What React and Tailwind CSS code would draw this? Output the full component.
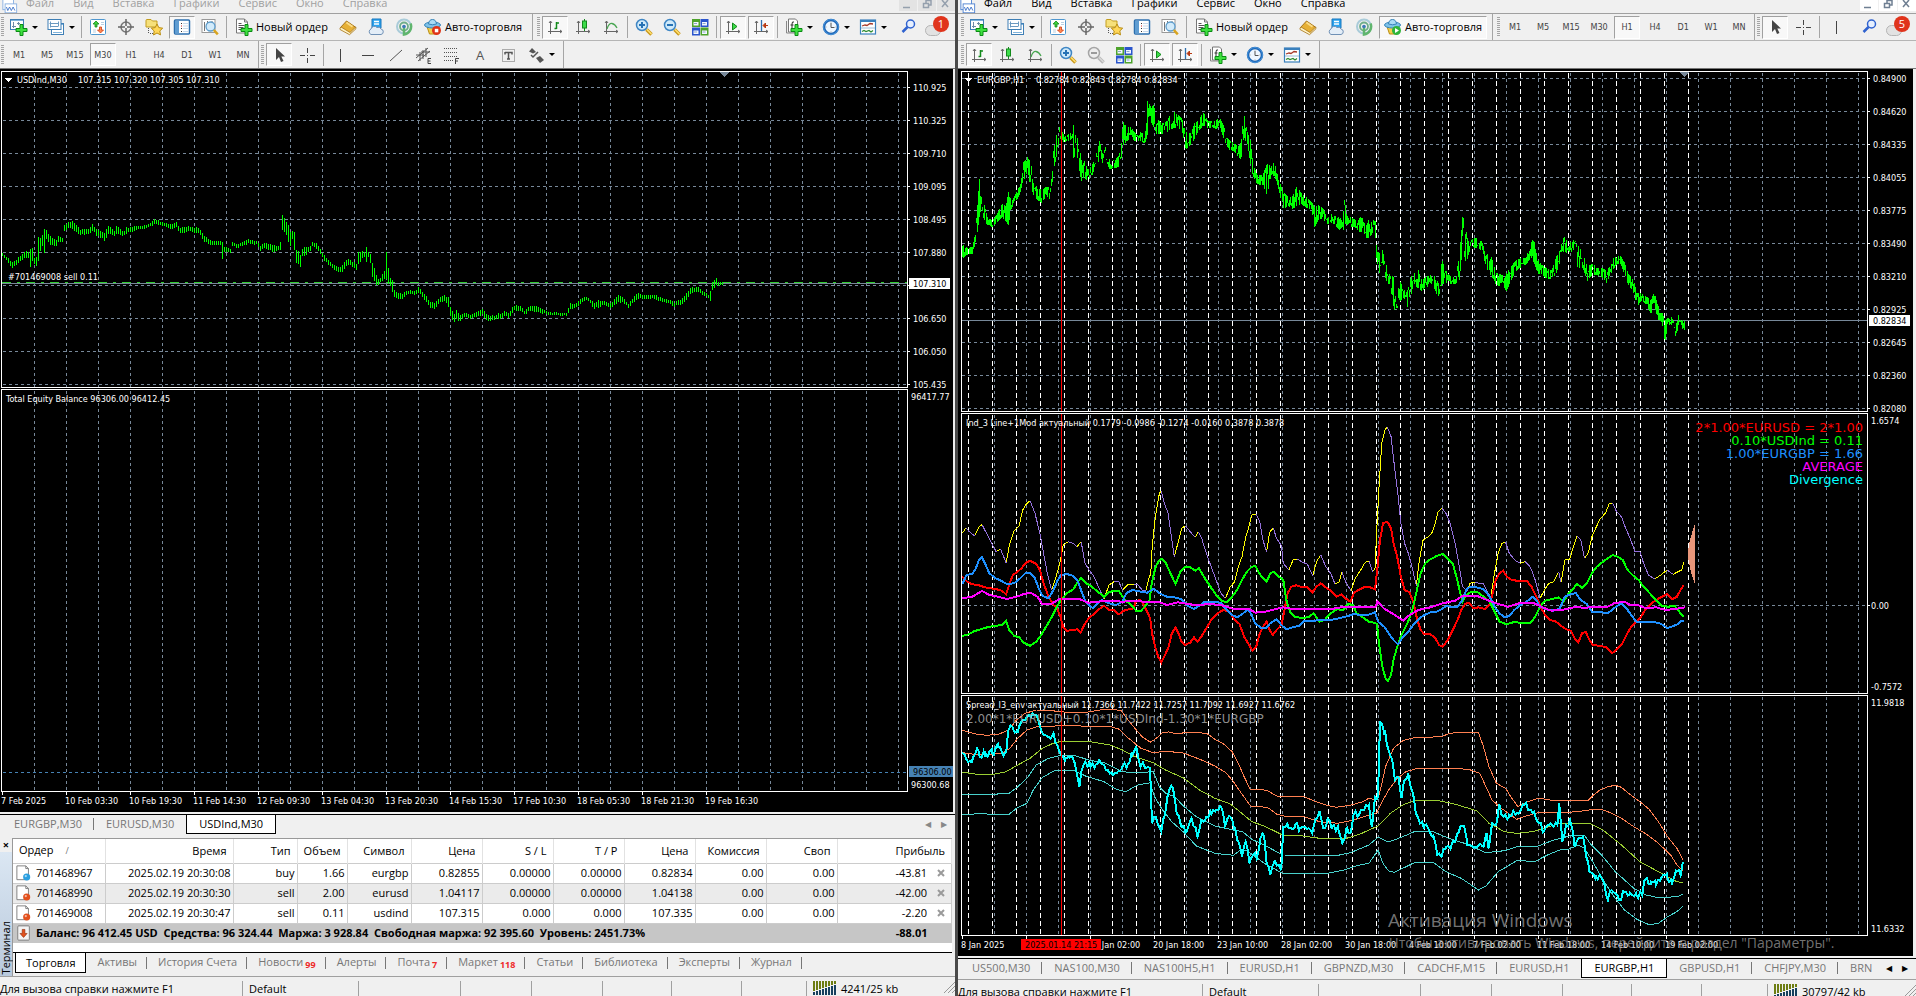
import React from "react";
import clsx from "clsx";

/* ---------- chart data ---------- */

// USDInd M30: [x, high, low]
const USDIND = [
    [2, 253, 255], [12, 262, 267], [20, 255, 260], [26, 251, 257], [28, 252, 257], [30, 241, 273], [32, 248, 262], [34, 258, 264],
    [36, 255, 265], [38, 237, 264], [40, 237, 250], [42, 235, 245], [44, 226, 252], [46, 230, 238], [48, 234, 243], [56, 240, 245],
    [58, 236, 241], [62, 238, 241], [64, 225, 230], [68, 222, 227], [72, 221, 228], [80, 229, 234], [88, 229, 234], [92, 224, 230],
    [97, 229, 236], [104, 233, 240], [108, 225, 233], [114, 231, 236], [116, 226, 233], [124, 231, 235], [126, 227, 233], [137, 226, 229],
    [147, 225, 227], [155, 218, 223], [162, 222, 225], [170, 224, 228], [176, 222, 227], [180, 227, 233], [188, 226, 230], [199, 228, 233],
    [203, 234, 240], [210, 240, 244], [220, 241, 244], [222, 242, 258], [224, 247, 251], [230, 248, 252], [232, 242, 245], [237, 244, 247],
    [248, 239, 243], [257, 241, 244], [260, 246, 250], [264, 242, 247], [272, 245, 251], [279, 246, 250], [280, 242, 249], [282, 215, 229],
    [284, 218, 231], [288, 225, 241], [290, 231, 245], [292, 229, 240], [294, 231, 249], [296, 246, 262], [300, 255, 266], [302, 247, 257],
    [310, 246, 250], [312, 242, 246], [317, 243, 248], [322, 252, 257], [328, 260, 265], [337, 267, 271], [342, 265, 271], [347, 258, 263],
    [356, 263, 269], [358, 252, 263], [364, 251, 256], [366, 247, 262], [368, 251, 257], [370, 252, 262], [372, 260, 276], [377, 279, 286],
    [383, 273, 280], [385, 269, 276], [386, 252, 278], [388, 267, 283], [390, 278, 285], [392, 280, 292], [394, 290, 297], [401, 294, 299],
    [408, 290, 293], [415, 291, 294], [418, 287, 292], [425, 295, 300], [430, 301, 307], [434, 302, 309], [440, 297, 302], [444, 294, 300],
    [448, 297, 306], [450, 306, 315], [454, 313, 323], [456, 310, 319], [460, 315, 320], [465, 312, 316], [470, 315, 318], [479, 310, 315],
    [482, 309, 314], [484, 310, 317], [487, 315, 320], [493, 315, 320], [497, 313, 317], [501, 314, 319], [503, 311, 315], [508, 312, 317],
    [514, 305, 310], [520, 306, 310], [524, 310, 314], [530, 306, 310], [537, 306, 311], [542, 309, 313], [550, 312, 314], [567, 313, 315],
    [569, 303, 309], [575, 304, 307], [580, 299, 303], [586, 296, 299], [590, 299, 303], [593, 302, 308], [598, 300, 307], [603, 301, 304],
    [610, 303, 307], [618, 295, 301], [622, 297, 302], [628, 303, 307], [630, 300, 305], [633, 296, 302], [637, 293, 298], [643, 295, 298],
    [653, 294, 298], [663, 298, 301], [670, 300, 303], [674, 302, 306], [682, 298, 303], [687, 292, 298], [690, 288, 293], [697, 286, 291],
    [703, 291, 294], [708, 294, 297], [710, 289, 300], [712, 282, 290], [716, 278, 285], [718, 281, 285], [722, 282, 284],
];

// EURGBP H1: [column, high, low]
const EURGBP = [
    [20, 552, 592], [28, 565, 580], [36, 560, 578], [40, 520, 560], [44, 430, 510], [47, 355, 470], [50, 400, 440], [54, 425, 475],
    [60, 470, 492], [68, 482, 498], [76, 460, 482], [84, 430, 470], [90, 440, 480], [94, 395, 495], [99, 425, 445], [106, 400, 420],
    [112, 380, 405], [117, 310, 370], [122, 300, 345], [125, 290, 350], [130, 300, 370], [135, 365, 405], [142, 385, 420], [148, 390, 425],
    [156, 380, 405], [163, 385, 420], [167, 270, 330], [172, 225, 290], [176, 200, 245], [180, 210, 240], [186, 230, 245], [192, 215, 240],
    [198, 222, 240], [200, 160, 300], [202, 225, 300], [206, 225, 290], [212, 290, 360], [217, 300, 350], [223, 330, 360], [230, 315, 345],
    [236, 290, 320], [241, 240, 300], [246, 255, 305], [251, 255, 310], [256, 300, 330], [264, 290, 320], [272, 292, 320], [277, 265, 300],
    [280, 185, 255], [286, 200, 240], [293, 200, 235], [300, 220, 240], [308, 215, 240], [316, 225, 248], [320, 118, 220], [325, 140, 180],
    [330, 135, 200], [335, 175, 220], [343, 190, 218], [350, 185, 215], [358, 160, 205], [363, 155, 200], [370, 165, 200], [376, 175, 210],
    [382, 215, 265], [390, 220, 250], [396, 190, 235], [403, 180, 210], [410, 155, 195], [418, 182, 200], [428, 182, 202], [438, 175, 205],
    [445, 200, 240], [452, 240, 265], [460, 250, 270], [468, 260, 290], [472, 245, 295], [476, 155, 230], [482, 215, 250], [487, 240, 310],
    [491, 305, 345], [498, 345, 370], [507, 345, 372], [514, 310, 405], [520, 320, 350], [526, 305, 345], [532, 350, 380], [540, 395, 445],
    [548, 410, 435], [555, 410, 445], [562, 380, 435], [570, 400, 430], [578, 410, 440], [586, 425, 445], [591, 440, 500], [598, 435, 475],
    [605, 445, 475], [612, 475, 492], [620, 460, 485], [628, 470, 500], [637, 475, 515], [640, 412, 490], [643, 465, 490], [655, 475, 500],
    [662, 480, 510], [668, 465, 515], [674, 500, 532], [680, 475, 530], [686, 480, 515], [691, 485, 535], [692, 575, 655], [698, 580, 630],
    [702, 568, 600], [706, 600, 650], [711, 640, 685], [716, 650, 700], [720, 645, 745], [724, 710, 758], [730, 665, 720], [736, 685, 710],
    [742, 690, 740], [748, 650, 700], [753, 640, 670], [758, 620, 680], [765, 660, 690], [772, 650, 685], [780, 645, 665], [787, 650, 690],
    [792, 670, 712], [798, 600, 670], [804, 630, 665], [812, 650, 670], [820, 650, 670], [826, 590, 660], [832, 453, 600], [838, 520, 600],
    [844, 540, 565], [850, 535, 560], [858, 530, 560], [864, 550, 580], [870, 585, 620], [876, 575, 640], [882, 615, 655], [888, 640, 685],
    [895, 645, 665], [902, 640, 692], [910, 620, 660], [918, 600, 630], [926, 595, 620], [934, 595, 612], [940, 560, 600], [944, 540, 590],
    [948, 545, 610], [954, 600, 640], [960, 615, 640], [968, 625, 655], [976, 630, 655], [983, 590, 640], [990, 560, 600], [996, 530, 570],
    [1004, 548, 580], [1010, 545, 570], [1014, 528, 560], [1018, 555, 620], [1026, 575, 620], [1034, 620, 660], [1042, 610, 640], [1050, 625, 642],
    [1058, 625, 650], [1064, 630, 668], [1070, 620, 650], [1076, 595, 625], [1082, 590, 610], [1088, 588, 610], [1094, 605, 640], [1100, 640, 670],
    [1108, 655, 690], [1115, 700, 735], [1122, 700, 720], [1130, 710, 730], [1137, 720, 760], [1143, 695, 735], [1148, 735, 775], [1154, 750, 780],
    [1160, 780, 845], [1164, 775, 805], [1170, 770, 790], [1177, 790, 825], [1182, 765, 800], [1186, 765, 790], [1190, 790, 812], [1193, 775, 800],
];

const DIVERGENCE = [
    [20, 400], [26, 383], [32, 397], [40, 407], [47, 380], [52, 374], [58, 395], [66, 425], [75, 455], [82, 447], [91, 488], [97, 430],
    [104, 392], [112, 378], [118, 330], [124, 312], [130, 302], [138, 340], [146, 400], [152, 460], [158, 520], [165, 570], [172, 530],
    [178, 492], [184, 435], [192, 425], [200, 430], [206, 440], [213, 425], [219, 490], [226, 510], [234, 530], [242, 565], [250, 598],
    [258, 555], [266, 545], [274, 545], [280, 570], [288, 555], [298, 553], [305, 555], [312, 570], [318, 572], [322, 540], [326, 520],
    [328, 450], [332, 370], [336, 320], [340, 280], [343, 274], [348, 310], [354, 340], [358, 390], [364, 470], [370, 430], [376, 385],
    [382, 377], [390, 395], [398, 412], [403, 395], [409, 417], [416, 460], [424, 500], [432, 540], [440, 580], [447, 595], [455, 560],
    [462, 545], [468, 500], [474, 470], [480, 412], [486, 375], [490, 345], [497, 343], [503, 365], [508, 420], [514, 455], [519, 395],
    [525, 385], [530, 415], [538, 437], [541, 490], [550, 510], [557, 480], [564, 477], [572, 487], [580, 492], [589, 527], [595, 485],
    [602, 465], [610, 500], [618, 520], [625, 552], [632, 545], [636, 515], [642, 545], [651, 572], [658, 535], [666, 512], [674, 487],
    [680, 483], [686, 515], [690, 505], [693, 380], [697, 240], [701, 130], [706, 90], [710, 81], [716, 110], [721, 190], [727, 280],
    [732, 370], [738, 430], [744, 460], [750, 500], [757, 557], [762, 480], [768, 420], [775, 412], [782, 400], [788, 370], [792, 335],
    [799, 325], [806, 343], [812, 370], [820, 430], [826, 490], [832, 560], [840, 572], [844, 550], [852, 547], [860, 550], [866, 552],
    [872, 575], [878, 592], [884, 520], [890, 460], [896, 430], [902, 427], [908, 460], [918, 482], [926, 490], [934, 485], [942, 500],
    [950, 540], [958, 595], [965, 570], [972, 550], [980, 545], [988, 515], [992, 547], [998, 480], [1006, 478], [1012, 440], [1018, 408],
    [1024, 420], [1030, 475], [1036, 460], [1042, 410], [1048, 385], [1056, 355], [1064, 340], [1070, 312], [1076, 310], [1082, 335],
    [1090, 350], [1096, 380], [1104, 415], [1112, 455], [1120, 455], [1126, 490], [1134, 525], [1144, 537], [1154, 525], [1164, 510],
    [1174, 523], [1182, 515], [1188, 510], [1191, 485],
];

const IND_EURUSD = [
    [20, 530], [28, 545], [36, 553], [46, 555], [56, 562], [66, 565], [76, 568], [84, 572], [91, 583], [96, 555], [102, 525], [108, 518],
    [116, 505], [122, 490], [130, 482], [140, 492], [146, 510], [152, 550], [160, 590], [168, 615], [174, 625], [180, 655], [184, 683],
    [190, 692], [200, 690], [206, 688], [212, 698], [218, 675], [226, 652], [234, 643], [242, 628], [250, 617], [258, 630], [266, 630],
    [274, 643], [282, 632], [290, 628], [298, 625], [302, 603], [308, 600], [314, 612], [320, 635], [325, 655], [328, 700], [333, 740],
    [338, 770], [343, 788], [349, 765], [355, 740], [360, 700], [366, 683], [371, 700], [376, 725], [381, 735], [390, 728], [396, 712],
    [402, 725], [408, 710], [416, 685], [424, 660], [434, 640], [444, 630], [454, 635], [462, 660], [470, 672], [478, 712], [484, 730],
    [491, 752], [497, 740], [502, 705], [508, 680], [514, 665], [519, 690], [524, 705], [530, 690], [538, 675], [542, 640], [548, 580],
    [554, 560], [562, 556], [572, 562], [580, 562], [588, 578], [594, 562], [602, 550], [610, 562], [618, 572], [628, 590], [636, 583],
    [642, 595], [650, 605], [656, 578], [666, 567], [674, 560], [682, 562], [690, 568], [694, 500], [698, 420], [703, 370], [710, 365],
    [716, 385], [720, 430], [726, 470], [732, 530], [738, 570], [746, 577], [752, 605], [758, 655], [764, 690], [770, 702], [780, 703],
    [788, 715], [794, 735], [800, 740], [808, 720], [816, 690], [824, 660], [830, 630], [836, 612], [842, 608], [850, 625], [858, 622],
    [868, 627], [876, 612], [881, 580], [886, 540], [892, 520], [898, 512], [904, 530], [912, 540], [924, 543], [936, 542], [944, 560],
    [952, 590], [960, 625], [966, 645], [974, 660], [984, 665], [994, 680], [1000, 688], [1008, 692], [1014, 715], [1020, 727], [1026, 700],
    [1032, 695], [1038, 720], [1044, 735], [1056, 738], [1066, 742], [1075, 760], [1082, 748], [1090, 735], [1098, 705], [1106, 680],
    [1114, 665], [1122, 650], [1130, 625], [1138, 612], [1146, 600], [1156, 590], [1164, 582], [1172, 598], [1180, 590], [1186, 570], [1191, 556],
];

const IND_USDIND = [
    [20, 708], [30, 703], [40, 693], [50, 688], [60, 682], [72, 677], [84, 676], [91, 662], [96, 690], [104, 707], [112, 712], [120, 728],
    [130, 737], [140, 725], [148, 705], [156, 680], [164, 655], [172, 625], [180, 600], [190, 580], [200, 568], [208, 545], [213, 533],
    [220, 548], [230, 560], [240, 575], [250, 590], [258, 577], [266, 572], [274, 573], [284, 600], [294, 615], [302, 632], [310, 632],
    [316, 620], [324, 600], [328, 545], [334, 500], [340, 480], [344, 476], [350, 488], [358, 520], [366, 552], [374, 515], [382, 500],
    [390, 502], [398, 512], [404, 505], [412, 530], [422, 558], [432, 585], [442, 603], [450, 607], [458, 590], [466, 570], [474, 540],
    [482, 515], [490, 500], [496, 498], [502, 520], [508, 535], [514, 545], [520, 520], [526, 515], [534, 530], [541, 540], [546, 600],
    [552, 635], [560, 650], [570, 654], [582, 652], [590, 640], [600, 665], [608, 660], [618, 640], [628, 628], [638, 630], [646, 612],
    [654, 615], [660, 640], [670, 652], [680, 665], [688, 668], [693, 672], [697, 740], [702, 800], [707, 835], [711, 842], [716, 825],
    [720, 780], [726, 740], [733, 705], [740, 680], [746, 655], [752, 620], [758, 570], [764, 520], [772, 488], [780, 478], [790, 468],
    [800, 462], [808, 475], [816, 490], [822, 530], [828, 575], [832, 605], [838, 585], [846, 575], [856, 576], [866, 590], [876, 605],
    [884, 635], [892, 665], [904, 673], [914, 667], [930, 668], [942, 670], [950, 650], [958, 620], [966, 602], [978, 597], [988, 592],
    [996, 605], [1004, 580], [1012, 565], [1018, 552], [1026, 563], [1034, 550], [1042, 520], [1050, 500], [1058, 488], [1068, 475],
    [1076, 465], [1084, 470], [1092, 480], [1100, 510], [1108, 525], [1118, 540], [1126, 560], [1136, 580], [1146, 600], [1156, 617],
    [1166, 620], [1176, 617], [1184, 635], [1191, 652],
];

const IND_EURGBP = [
    [20, 552], [27, 525], [36, 522], [42, 505], [47, 480], [52, 472], [58, 495], [64, 520], [74, 535], [84, 543], [92, 552], [104, 550],
    [114, 535], [122, 520], [130, 518], [138, 535], [144, 565], [150, 588], [160, 595], [168, 570], [175, 540], [180, 525], [190, 522],
    [200, 528], [208, 545], [214, 577], [220, 605], [232, 625], [238, 612], [246, 600], [258, 610], [270, 615], [280, 605], [286, 580],
    [296, 570], [310, 575], [320, 578], [331, 566], [340, 580], [352, 590], [364, 592], [376, 598], [386, 618], [396, 627], [404, 618],
    [412, 607], [430, 606], [440, 608], [448, 628], [458, 645], [466, 652], [476, 640], [484, 627], [490, 645], [495, 670], [505, 683],
    [512, 685], [520, 670], [530, 658], [538, 675], [546, 688], [556, 682], [566, 678], [576, 662], [590, 662], [604, 660], [618, 660],
    [632, 655], [646, 648], [656, 642], [666, 645], [678, 645], [690, 637], [695, 665], [705, 680], [712, 700], [720, 720], [727, 733],
    [734, 715], [742, 700], [752, 675], [762, 655], [770, 645], [780, 637], [790, 635], [798, 628], [806, 617], [814, 622], [824, 620],
    [832, 600], [838, 570], [844, 560], [854, 562], [866, 567], [876, 590], [884, 620], [892, 640], [900, 652], [908, 648], [916, 630],
    [926, 615], [936, 605], [946, 590], [952, 600], [958, 620], [968, 628], [980, 632], [990, 625], [998, 590], [1008, 582], [1016, 580],
    [1024, 600], [1034, 612], [1042, 635], [1054, 636], [1068, 640], [1078, 625], [1090, 610], [1098, 625], [1106, 645], [1114, 665],
    [1130, 665], [1150, 668], [1158, 675], [1164, 685], [1174, 678], [1182, 672], [1188, 662], [1191, 662],
];

const IND_AVERAGE = [
    [20, 595], [36, 590], [52, 573], [64, 585], [78, 590], [92, 597], [108, 590], [120, 582], [131, 578], [142, 590], [150, 613], [164, 612],
    [178, 597], [190, 596], [210, 597], [224, 608], [240, 605], [260, 602], [280, 605], [300, 602], [320, 606], [340, 607], [352, 615],
    [370, 607], [380, 610], [400, 616], [420, 612], [440, 615], [460, 627], [484, 626], [496, 638], [512, 635], [540, 622], [560, 628],
    [590, 626], [620, 627], [640, 620], [670, 622], [691, 620], [694, 605], [704, 625], [716, 638], [728, 652], [736, 662], [744, 648],
    [760, 630], [780, 622], [800, 610], [820, 602], [832, 588], [856, 588], [876, 603], [890, 612], [906, 620], [924, 610], [946, 608],
    [962, 622], [976, 632], [1000, 628], [1016, 620], [1030, 624], [1046, 620], [1066, 622], [1078, 610], [1095, 605], [1104, 615],
    [1116, 615], [1130, 625], [1146, 622], [1162, 630], [1180, 626], [1193, 622],
];

const ENV_UPPER2 = [
    [20, 120], [30, 127], [45, 133], [60, 136], [80, 132], [95, 120], [108, 90], [122, 70], [140, 60], [165, 62], [195, 68], [225, 66],
    [250, 58], [265, 58], [278, 62], [285, 80], [300, 115], [312, 140], [325, 157], [335, 145], [345, 127], [355, 126], [370, 132],
    [385, 126], [400, 126], [418, 132], [432, 150], [445, 163], [458, 185], [468, 220], [478, 262], [488, 300], [500, 298], [515, 301],
    [530, 318], [550, 320], [575, 320], [590, 332], [610, 345], [627, 352], [650, 346], [670, 335], [680, 325], [688, 328], [694, 330],
    [700, 290], [707, 230], [720, 175], [735, 152], [752, 144], [780, 142], [800, 138], [812, 130], [830, 126], [845, 129], [858, 128],
    [866, 170], [875, 230], [887, 280], [902, 295], [912, 325], [922, 350], [935, 337], [955, 325], [968, 328], [980, 332], [1035, 332],
    [1045, 315], [1055, 300], [1068, 290], [1080, 286], [1090, 292], [1105, 315], [1120, 335], [1135, 358], [1150, 395], [1165, 440],
    [1180, 475], [1190, 510],
];

const ENV_UPPER1 = [
    [20, 188], [40, 193], [60, 194], [85, 190], [97, 175], [110, 145], [125, 120], [145, 108], [170, 108], [200, 107], [240, 110],
    [262, 110], [275, 118], [290, 145], [310, 175], [328, 187], [350, 185], [375, 187], [395, 200], [415, 215], [432, 230], [448, 248],
    [460, 275], [475, 315], [488, 348], [505, 350], [518, 355], [530, 372], [542, 378], [575, 380], [600, 395], [630, 400], [655, 390],
    [675, 378], [693, 368], [700, 340], [712, 300], [725, 268], [740, 245], [755, 237], [790, 236], [825, 235], [845, 240], [860, 250],
    [870, 290], [880, 330], [895, 355], [920, 388], [935, 378], [955, 368], [985, 368], [1010, 366], [1030, 362], [1045, 358],
    [1060, 360], [1072, 368], [1090, 385], [1110, 410], [1130, 432], [1150, 460], [1170, 495], [1180, 525], [1190, 542],
];

const ENV_MIDDLE = [
    [20, 246], [40, 252], [70, 253], [90, 246], [110, 225], [130, 205], [150, 175], [165, 162], [180, 154], [230, 156], [260, 165],
    [280, 180], [300, 200], [330, 218], [350, 240], [380, 265], [405, 300], [430, 325], [455, 342], [475, 372], [490, 395], [510, 408],
    [540, 435], [570, 437], [600, 445], [640, 447], [665, 433], [680, 420], [695, 408], [715, 370], [735, 345], [755, 331], [790, 331],
    [815, 340], [855, 362], [875, 400], [900, 425], [920, 430], [945, 425], [965, 415], [985, 402], [1010, 400], [1040, 402],
    [1060, 420], [1090, 465], [1120, 515], [1150, 545], [1180, 575], [1190, 578],
];

const ENV_LOWER1 = [
    [20, 314], [60, 313], [95, 311], [110, 290], [125, 265], [140, 225], [160, 205], [180, 196], [205, 198], [225, 210], [250, 218],
    [280, 245], [300, 248], [330, 245], [340, 290], [350, 310], [365, 320], [380, 350], [400, 380], [430, 408], [460, 420], [475, 425],
    [490, 448], [510, 465], [540, 495], [630, 496], [650, 488], [680, 465], [695, 442], [712, 456], [735, 440], [755, 424], [785, 426],
    [810, 445], [835, 460], [870, 488], [900, 482], [920, 470], [955, 468], [980, 450], [1010, 436], [1030, 436], [1040, 462],
    [1060, 500], [1080, 545], [1110, 595], [1130, 615], [1150, 623], [1180, 620], [1190, 613],
];

const ENV_LOWER2 = [
    [20, 375], [45, 371], [95, 374], [108, 355], [125, 340], [135, 300], [150, 262], [170, 242], [200, 240], [220, 258], [250, 275],
    [270, 298], [285, 305], [305, 285], [325, 278], [332, 320], [345, 360], [360, 395], [380, 428], [400, 468], [430, 490], [460, 496],
    [470, 482], [480, 480], [492, 495], [510, 520], [540, 550], [610, 551], [640, 540], [660, 527], [680, 520], [695, 480], [703, 520],
    [712, 543], [722, 547], [735, 535], [755, 517], [785, 518], [805, 545], [830, 565], [858, 600], [870, 588], [890, 545], [920, 512],
    [950, 514], [970, 495], [990, 480], [1005, 477], [1020, 465], [1030, 475], [1045, 520], [1060, 570], [1080, 625], [1095, 660],
    [1115, 688], [1135, 704], [1150, 700], [1165, 680], [1180, 665], [1190, 648],
];

const SPREAD = [
    [20, 190], [26, 205], [32, 213], [38, 200], [44, 175], [48, 200], [58, 190], [68, 190], [78, 170], [84, 185], [91, 190], [95, 120],
    [102, 115], [110, 125], [116, 95], [122, 90], [128, 75], [134, 70], [140, 75], [146, 110], [152, 135], [160, 140], [168, 130],
    [174, 165], [180, 195], [188, 205], [196, 200], [204, 235], [210, 292], [214, 240], [220, 215], [228, 230], [236, 225], [242, 210],
    [250, 225], [256, 240], [264, 255], [272, 245], [280, 230], [288, 225], [296, 195], [303, 175], [310, 225], [318, 235], [325, 245],
    [328, 400], [334, 380], [343, 425], [350, 360], [356, 300], [362, 295], [368, 370], [376, 410], [384, 425], [392, 385], [402, 440],
    [408, 390], [416, 380], [424, 372], [432, 360], [440, 350], [447, 405], [455, 380], [463, 415], [468, 455], [474, 500], [480, 455],
    [486, 520], [492, 495], [498, 505], [504, 445], [510, 440], [514, 520], [520, 555], [527, 510], [538, 530], [541, 410], [550, 415],
    [560, 405], [568, 415], [576, 410], [588, 430], [593, 390], [600, 365], [606, 415], [613, 385], [620, 410], [630, 415], [637, 460],
    [644, 410], [650, 430], [655, 375], [664, 375], [672, 360], [680, 345], [685, 410], [690, 320], [694, 325], [696, 250], [698, 97],
    [706, 120], [712, 180], [718, 210], [722, 270], [728, 260], [733, 325], [738, 270], [744, 250], [750, 300], [757, 370], [763, 400],
    [770, 405], [778, 420], [785, 440], [791, 495], [798, 500], [806, 470], [814, 465], [820, 455], [828, 410], [836, 420], [840, 465],
    [850, 470], [858, 465], [866, 470], [871, 430], [875, 470], [880, 400], [888, 395], [892, 345], [898, 380], [908, 375], [920, 370],
    [932, 345], [940, 360], [948, 365], [956, 400], [964, 425], [972, 405], [980, 410], [986, 405], [989, 340], [994, 455], [1000, 405],
    [1008, 400], [1014, 470], [1022, 445], [1028, 440], [1033, 500], [1038, 545], [1048, 555], [1056, 560], [1062, 580], [1068, 630],
    [1074, 600], [1080, 610], [1086, 630], [1094, 605], [1104, 610], [1114, 615], [1124, 612], [1128, 570], [1138, 575], [1146, 585],
    [1154, 565], [1164, 560], [1172, 580], [1180, 545], [1186, 555], [1190, 515],
];

/* ---------- chart helpers ---------- */

const noise = (n) => {
    const v = Math.sin(n * 12.9898) * 43758.5453;
    return (v - Math.floor(v)) * 2 - 1;
};

const range = (from, to, step) => {
    const out = [];
    for (let v = from; v <= to; v += step) out.push(v);
    return out;
};

// stored columns -> chart units
const scaleX = (c) => 950 + c * 0.616;
const project = (points, top) => points.map(([c, ...levels]) => [scaleX(c), ...levels.map((l) => top + l / 3)]);

// one vertical high/low bar per step
const barsPath = (anchors, step, spread) => {
    let d = "";
    let i = 0;
    const last = anchors[anchors.length - 1][0];
    for (let x = Math.round(anchors[0][0]); x <= last; x += step) {
        while (i < anchors.length - 2 && anchors[i + 1][0] <= x) i++;
        const [ax, ah, al] = anchors[i];
        const [bx, bh, bl] = anchors[i + 1];
        const t = Math.min(1, Math.max(0, (x - ax) / (bx - ax)));
        const high = ah + (bh - ah) * t;
        const low = al + (bl - al) * t;
        const k = (low - high) * spread;
        d += `M${x + 0.5} ${Math.round(high + Math.max(0, noise(x) * k))}V${Math.round(low - Math.max(0, noise(x + 7) * k)) + 1}`;
    }
    return d;
};

const linePath = (points) => points.map(([x, y], i) => `${i ? "L" : "M"}${x.toFixed(1)} ${y.toFixed(1)}`).join("");

const roughPath = (points, step, amp) => {
    const out = [];
    for (let i = 0; i < points.length - 1; i++) {
        const [ax, ay] = points[i];
        const [bx, by] = points[i + 1];
        out.push([ax, ay]);
        for (let x = ax + step; x < bx; x += step) {
            out.push([x, ay + ((by - ay) * (x - ax)) / (bx - ax) + noise(x) * amp]);
        }
    }
    out.push(points[points.length - 1]);
    return linePath(out);
};

// segments going up on screen are yellow, going down are purple
const splitByDirection = (points) => {
    let up = "";
    let down = "";
    for (let i = 0; i < points.length - 1; i++) {
        const seg = linePath([points[i], points[i + 1]]);
        if (points[i + 1][1] < points[i][1]) up += seg;
        else down += seg;
    }
    return { up, down };
};

const CHART_FONT = "font-['DejaVu_Sans_Condensed','DejaVu_Sans',sans-serif]";

const Frame = ({ x, y, right, bottom }) => (
    <rect x={x + 0.5} y={y + 0.5} width={right - x} height={bottom - y} fill="none" stroke="#fff" />
);

const Grid = ({ xs, ys, left, right, top, bottom }) => (
    <path
        d={xs.map((x) => `M${x + 0.5} ${top}V${bottom}`).join("") + ys.map((y) => `M${left} ${y + 0.5}H${right}`).join("")}
        stroke="#778899"
        strokeDasharray="3 3"
        fill="none"
    />
);

const UsdIndChart = () => {
    const xs = range(34, 898, 32);
    const ys = range(87, 384, 33);
    const prices = ["110.925", "110.325", "109.710", "109.095", "108.495", "107.880", null, "106.650", "106.050", "105.435"];
    const dates = ["10 Feb 03:30", "10 Feb 19:30", "11 Feb 14:30", "12 Feb 09:30", "13 Feb 04:30", "13 Feb 20:30", "14 Feb 15:30", "17 Feb 10:30", "18 Feb 05:30", "18 Feb 21:30", "19 Feb 16:30"];

    return (
        <svg viewBox="0 69 953 743" className={clsx("block w-full h-auto bg-black", CHART_FONT)} fontSize="9" fill="#fff" role="img" aria-label="USDInd,M30">
            <g shapeRendering="crispEdges">
                <Grid xs={xs} ys={ys} left={3} right={907} top={73} bottom={387} />
                <Grid xs={xs} ys={[]} left={3} right={907} top={391} bottom={791} />
                <path d="M3 772.5H907" stroke="#4682b4" strokeDasharray="3 3" />
                <path d="M2 283.5H907" stroke="#778899" />
                <path d="M2 282.5H907" stroke="#32cd32" strokeDasharray="9 6 3 6" />
                <path d={barsPath(USDIND, 2, 0.25)} stroke="#0f0" />
                <Frame x={1} y={71} right={907} bottom={387} />
                <Frame x={1} y={389} right={907} bottom={791} />
                <path d={ys.map((y) => `M908 ${y + 0.5}h2`).join("") + "M2.5 792v3" + dates.map((_, i) => `M${66.5 + i * 64} 792v3`).join("")} stroke="#fff" />
                <path d="M719 72h10l-5 5z" fill="#778899" />
                <path d="M5 78h7l-3.5 4z" />
                <rect x="909" y="278" width="41" height="11" />
                <rect x="909" y="766" width="44" height="11" fill="#4682b4" />
            </g>
            <text x="17" y="83">USDInd,M30</text>
            <text x="78" y="83">107.315 107.320 107.305 107.310</text>
            <text x="8" y="280">#701469008 sell 0.11</text>
            <text x="6" y="402">Total Equity Balance 96306.00 96412.45</text>
            {prices.map((p, i) => p && <text key={p} x="913" y={ys[i] + 4}>{p}</text>)}
            <text x="913" y="287" fill="#000">107.310</text>
            <text x="911" y="400">96417.77</text>
            <text x="913" y="775" fill="#000">96306.00</text>
            <text x="911" y="788">96300.68</text>
            <text x="1" y="804">7 Feb 2025</text>
            {dates.map((d, i) => <text key={d} x={65 + i * 64} y="804">{d}</text>)}
        </svg>
    );
};

const EurGbpChart = () => {
    const xs = range(994, 1858, 32);
    const days = range(968, 1688, 24);
    const ys = range(78, 408, 33);
    const prices = ["0.84900", "0.84620", "0.84335", "0.84055", "0.83775", "0.83490", "0.83210", "0.82925", "0.82645", "0.82360", "0.82080"];
    const dates = ["16 Jan 02:00", "20 Jan 18:00", "23 Jan 10:00", "28 Jan 02:00", "30 Jan 18:00", "4 Feb 10:00", "7 Feb 02:00", "11 Feb 18:00", "14 Feb 10:00", "19 Feb 02:00"];
    const legend = [
        ["2*1.00*EURUSD = 2*1.00", "#f00"],
        ["0.10*USDInd = 0.11", "#0f0"],
        ["1.00*EURGBP = 1.66", "#1e90ff"],
        ["AVERAGE", "#f0f"],
        ["Divergence", "#0ff"],
    ];
    const panels = [[71, 411], [413, 693], [695, 935]];
    const divergence = splitByDirection(project(DIVERGENCE, 400));

    return (
        <svg viewBox="958 69 955 887" className={clsx("block w-full h-auto bg-black", CHART_FONT)} fontSize="9" fill="#fff" role="img" aria-label="EURGBP,H1">
            <g shapeRendering="crispEdges">
                {panels.map(([top, bottom], i) => (
                    <g key={top}>
                        <Grid xs={xs} ys={i === 0 ? ys : i === 1 ? [605] : []} left={962} right={1867} top={top + 2} bottom={bottom} />
                        <path d={days.map((x) => `M${x + 0.5} ${top + 2}V${bottom}`).join("")} stroke="#fff" strokeDasharray="5 3" />
                    </g>
                ))}
                <path d="M962 320.5H1867" stroke="#778899" />
                <path d={barsPath(project(EURGBP, 60), 1, 0.85)} stroke="#0f0" />

                <path d={divergence.up} stroke="#ff0" fill="none" />
                <path d={divergence.down} stroke="#9370db" fill="none" />
                <path d={linePath(project(IND_EURUSD, 400))} stroke="#f00" strokeWidth="2" fill="none" />
                <path d={linePath(project(IND_USDIND, 400))} stroke="#0f0" strokeWidth="2" fill="none" />
                <path d={linePath(project(IND_EURGBP, 400))} stroke="#1e90ff" strokeWidth="2" fill="none" />
                <path d={linePath(project(IND_AVERAGE, 400))} stroke="#f0f" strokeWidth="2" fill="none" />
                <path d="M1695 524V585Q1688 564 1688 554Q1688 543 1695 524z" fill="#e9967a" />

                <path d={linePath(project(ENV_UPPER2, 690))} stroke="#ff7f50" fill="none" />
                <path d={linePath(project(ENV_UPPER1, 690))} stroke="#ff7f50" fill="none" />
                <path d={linePath(project(ENV_MIDDLE, 690))} stroke="#9acd32" fill="none" />
                <path d={linePath(project(ENV_LOWER1, 690))} stroke="#48d1cc" fill="none" />
                <path d={linePath(project(ENV_LOWER2, 690))} stroke="#48d1cc" fill="none" />
                <path d={roughPath(project(SPREAD, 690), 2, 4)} stroke="#0ff" strokeWidth="2" fill="none" />

                <path d="M1061.5 72V411M1061.5 414V693M1061.5 696V935" stroke="#f00" />
                {panels.map(([top, bottom]) => <Frame key={top} x={961} y={top} right={1867} bottom={bottom} />)}
                <path d={[...ys, 605].map((y) => `M1868 ${y + 0.5}h2`).join("") + range(962, 1666, 64).map((x) => `M${x + 0.5} 936v3`).join("")} stroke="#fff" />
                <path d="M1680 72h9l-4.5 5z" fill="#778899" />
                <path d="M965 78h7l-3.5 4z" />
                <rect x="1869" y="315" width="41" height="11" />
            </g>
            <text x="977" y="83">EURGBP,H1</text>
            <text x="1036" y="83">0.82784 0.82843 0.82784 0.82834</text>
            {prices.map((p, i) => <text key={p} x="1873" y={ys[i] + 4}>{p}</text>)}
            <text x="1873" y="324" fill="#000">0.82834</text>
            <text x="966" y="426">Ind_3 Line+1Mod актуальный 0.1779 -0.0986 -0.1274 -0.0160 0.3878 0.3878</text>
            <text x="1871" y="424">1.6574</text>
            <text x="1871" y="609">0.00</text>
            <text x="1871" y="690">-0.7572</text>
            {legend.map(([label, color], i) => (
                <text key={label} x="1863" y={432 + i * 13} fill={color} textAnchor="end" fontSize="13" className="font-['DejaVu_Sans',sans-serif]">{label}</text>
            ))}
            <text x="966" y="708">Spread_I3_env актуальный 11.7366 11.7422 11.7257 11.7092 11.6927 11.6762</text>
            <text x="966" y="723" fill="#a9a9a9" fillOpacity="0.85" fontSize="12" className="font-['DejaVu_Sans',sans-serif]">2.00*1*EURUSD+0.10*1*USDInd-1.30*1*EURGBP</text>
            <text x="1871" y="706">11.9818</text>
            <text x="1871" y="932">11.6332</text>
            <text x="961" y="948">8 Jan 2025</text>
            {dates.map((d, i) => <text key={d} x={1089 + i * 64} y="948">{d}</text>)}
            <rect x="1021" y="939" width="80" height="11" fill="#f00" />
            <text x="1025" y="948" fill="#000">2025.01.14 21:15</text>
            <g fill="#999" fillOpacity="0.75" className="font-['Open_Sans',sans-serif]">
                <text x="1388" y="927" fontSize="19">Активация Windows</text>
                <text x="1389" y="948" fontSize="14">Чтобы активировать Windows, перейдите в раздел "Параметры".</text>
            </g>
        </svg>
    );
};

/* ---------- icons ---------- */

const Icon = ({ size = 18, children }) => (
    <svg width={size} height={size} viewBox="0 0 18 18" fill="none" className="shrink-0" aria-hidden="true">{children}</svg>
);

const Plus = ({ x = 7, y = 6 }) => (
    <path d={`M${x + 4} ${y + 0.5}h3v4h4v3h-4v4h-3v-4h-4v-3h4z`} fill="#3fe03f" stroke="#0a8a14" />
);

const NewChartIcon = () => (
    <Icon>
        <rect x="0.5" y="1.5" width="13" height="10" fill="#fff" stroke="#3f7fb5" />
        <path d="M1 2.5h12" stroke="#7fb3dc" />
        <path d="M3.5 4v6M2 8.5h4M8.5 4v3M7 5.5h3" stroke="#6d8ba6" />
        <Plus x={6} />
    </Icon>
);

const ProfilesIcon = () => (
    <Icon>
        <rect x="4.5" y="5.5" width="12" height="11" fill="#fff" stroke="#3f7fb5" />
        <path d="M6 14.5h9M5 6.5h11" stroke="#7fb3dc" />
        <rect x="1" y="1.5" width="13" height="10" fill="#fff" stroke="#3f7fb5" />
        <path d="M3.5 3.5v6M11.5 3.5v5M2.5 5.5h9M3 8.5h8" stroke="#6d9ac0" />
    </Icon>
);

const MarketIcon = () => (
    <Icon>
        <rect x="1.5" y="1.5" width="15" height="15" rx="1" fill="#fff" stroke="#4f97cf" />
        <path d="M4 12h3M4 14h3M12 4.5h3M12 6.5h3" stroke="#b9cfe0" />
        <path d="M7 3l3 3H8v3H6V6H4z" fill="#3fd03f" stroke="#158a1c" strokeWidth="0.8" />
        <path d="M11.5 15l-3-3h2V9h2v3h2z" fill="#ff8a55" stroke="#cf3c12" strokeWidth="0.8" />
    </Icon>
);

const TargetIcon = () => (
    <Icon>
        <circle cx="9" cy="9" r="5" stroke="#777" strokeWidth="1.5" />
        <path d="M9 1v7M9 10v7M1 9h7M10 9h7" stroke="#666" strokeWidth="1.5" />
    </Icon>
);

const FavoritesIcon = () => (
    <Icon>
        <path d="M1 4V2.5Q1 1.5 2 1.5h4L7.500 3H12v6H1z" fill="#f6e07a" stroke="#c39d1f" />
        <path d="M3.5 10v6M5 15.5h3" stroke="#555" strokeDasharray="1 1" />
        <path d="M12 6l1.800 3.600 3.900.6-2.900 2.700.7 4-3.500-1.900L8.500 17l.7-4-2.900-2.800 3.900-.6z" fill="#ffd75a" stroke="#b98d12" />
    </Icon>
);

const NavigatorIcon = () => (
    <Icon>
        <rect x="1.5" y="2" width="15" height="14" rx="1" fill="#fff" stroke="#2d6fae" strokeWidth="1.5" />
        <path d="M2 3h4v12.5H2z" fill="#5f9dd2" />
        <path d="M8 5.5h1M8 10.5h1M8 13.5h1" stroke="#333" />
        <path d="M8 8h1" stroke="#d22" />
        <path d="M10 5.5h5M10 8h5M10 10.5h5M10 13.5h5" stroke="#c7d9ec" />
    </Icon>
);

const TesterIcon = () => (
    <Icon>
        <rect x="1" y="1.5" width="13" height="13" fill="#fff" stroke="#999" />
        <path d="M3.5 4v9M6.5 3v5M11 3v4" stroke="#777" />
        <circle cx="9.5" cy="8.5" r="4.5" fill="#d2ebfb" stroke="#5c9ccc" strokeWidth="1.3" />
        <path d="M12.8 12l4 4.300" stroke="#d9a520" strokeWidth="2.5" />
    </Icon>
);

const NewOrderIcon = () => (
    <Icon>
        <path d="M1.5 1h8l3 3v11h-11z" fill="#fff" stroke="#777" />
        <path d="M9.5 1v3h3" stroke="#777" />
        <path d="M3.5 5.5h3M3.5 7.5h6M3.5 9.5h5M3.5 11.5h4" stroke="#555" />
        <Plus x={6} />
    </Icon>
);

const BookIcon = () => (
    <Icon>
        <path d="M1 10l6.500-7L17 9.500 10.500 16z" fill="#e6b036" stroke="#a6741a" />
        <path d="M1 10l1-1 9 5.500 5.500-5.300.5 1.500-6.500 6L1 11.500z" fill="#fff3c4" stroke="#a6741a" strokeWidth="0.8" />
        <path d="M7.5 4.500l6 4.200" stroke="#fadd8a" strokeWidth="2" />
    </Icon>
);

const VpsIcon = () => (
    <Icon>
        <path d="M5 1h9v9H5z" fill="#2ba3ee" stroke="#1977bd" />
        <path d="M7 3.5h5M7 6h5" stroke="#fff" strokeWidth="1.5" />
        <path d="M4 16.5a3 3 0 010-5.500 3.500 3.500 0 016-1.500 3 3 0 014 1.500 2.800 2.800 0 010 5.500z" fill="#e3edf7" stroke="#6f90b5" />
    </Icon>
);

const SignalIcon = () => (
    <Icon>
        <circle cx="9" cy="8.5" r="7" stroke="#a9cbd9" strokeWidth="2" />
        <circle cx="9" cy="8.5" r="4" stroke="#6fae8a" strokeWidth="1.8" />
        <path d="M9 8.5v8a8 8 0 006.500-11" stroke="#5fb56d" strokeWidth="2.5" />
        <circle cx="9" cy="8.5" r="1.8" fill="#3d78b8" />
    </Icon>
);

const AutoTradeIcon = ({ running }) => (
    <Icon>
        <path d="M3 8.5l2.500 7.500h7L15 8.500z" fill="#f3cf4e" stroke="#b98d12" />
        <ellipse cx="8.5" cy="7" rx="8" ry="3" fill="#7ec3ea" stroke="#3784b8" />
        <path d="M4.5 6Q5 1.500 8.500 1.500T12.500 6Q8.500 7.500 4.500 6z" fill="#a9dbf5" stroke="#3784b8" />
        <circle cx="12.5" cy="12.5" r="4.5" fill={running ? "#2fb53a" : "#e03317"} />
        {running ? <path d="M11 10l4 2.500-4 2.500z" fill="#fff" /> : <rect x="10.8" y="10.8" width="3.5" height="3.5" fill="#fff" />}
    </Icon>
);

const Axes = () => <path d="M4.5 3v13M2 13.5h14M3 5l1.500-2L6 5M14 12l2 1.500-2 1.500" stroke="#666" />;

const BarChartIcon = () => (
    <Icon><Axes /><path d="M8.5 10.5h2M10.5 4v7M10.5 5h2.500" stroke="#138a1c" strokeWidth="1.5" /></Icon>
);
const CandleIcon = () => (
    <Icon><Axes /><path d="M10.5 1v12" stroke="#138a1c" /><rect x="8.5" y="3" width="4" height="7" fill="#3ddc4a" stroke="#138a1c" /></Icon>
);
const LineChartIcon = () => (
    <Icon><Axes /><path d="M5 11Q7 5 10 5.500T15 10" stroke="#4aa653" strokeWidth="1.3" /></Icon>
);
const AutoScrollIcon = () => (
    <Icon><Axes /><path d="M8.5 5v7l4.500-3.500z" fill="#3ddc4a" stroke="#138a1c" /></Icon>
);
const ShiftIcon = () => (
    <Icon><Axes /><path d="M9.5 2v11" stroke="#2d6fae" strokeWidth="1.3" /><path d="M16 7.5h-4M13.5 5L11 7.500l2.500 2.500z" stroke="#b93a12" fill="#b93a12" /></Icon>
);

const ZoomIcon = ({ out, disabled }) => (
    <Icon>
        <path d="M11.5 11.5l5 5" stroke={disabled ? "#b5b5b5" : "#c8971a"} strokeWidth="3.5" />
        <path d="M12 11.5l4.500 4.500" stroke={disabled ? "#d9d9d9" : "#ffe070"} strokeWidth="1.5" />
        <circle cx="7" cy="7" r="5.5" fill={disabled ? "#ededed" : "#cfeafa"} stroke={disabled ? "#a5a5a5" : "#3f86c4"} strokeWidth="1.5" />
        <path d={out ? "M4 7h6" : "M4 7h6M7 4v6"} stroke={disabled ? "#9a9a9a" : "#2672b5"} strokeWidth="2" />
    </Icon>
);

const TileIcon = () => (
    <Icon>
        <path d="M1 1h8v8H1zM9.5 9.5h8v8h-8z" fill="#4ea32c" />
        <path d="M9.5 1h8v8h-8zM1 9.5h8v8H1z" fill="#2a55cc" />
        <path d="M2.5 4h5v3.500h-5zM11 4h5v3.500h-5zM2.500 12.500h5V16h-5zM11 12.500h5V16h-5z" fill="#f3f7ff" />
        <path d="M3 5.5h3M11.5 5.5h3M3 14h3M11.5 14h3" stroke="#8aa7c9" />
    </Icon>
);

const IndicatorsIcon = () => (
    <Icon>
        <path d="M3.5 1h7l2 2v11h-9z" fill="#fff" stroke="#777" />
        <path d="M1.5 3v12h9" stroke="#888" />
        <path d="M9 4Q7 3 7 6v5M5.5 7h3" stroke="#333" />
        <Plus x={6} />
    </Icon>
);

const ClockIcon = () => (
    <Icon>
        <circle cx="9" cy="9" r="7" fill="#eef7ff" stroke="#1d66b8" strokeWidth="2.5" />
        <circle cx="9" cy="9" r="7.5" stroke="#5aa7e6" strokeWidth="0.7" />
        <path d="M9 5v4.500h3.500" stroke="#555" />
        <path d="M9 3.5v1M9 13.5v1M3.5 9h1M13.5 9h1" stroke="#999" />
    </Icon>
);

const TemplateIcon = () => (
    <Icon>
        <rect x="1.5" y="2" width="15" height="14" fill="#fff" stroke="#3a80bd" strokeWidth="1.2" />
        <path d="M1.5 3h15" stroke="#3a80bd" strokeWidth="2" />
        <path d="M2 10h14" stroke="#9dbcd6" />
        <path d="M3 8l3-1 2 .5 3-2 3 .5" stroke="#a83a2a" strokeWidth="1.3" />
        <path d="M3 13.5l2-1 2 1 3-1 2 1.500 2-1.500" stroke="#2c8a2f" strokeWidth="1.3" />
    </Icon>
);

const SearchIcon = () => (
    <Icon>
        <circle cx="11.5" cy="6" r="4" fill="#e7f0ff" stroke="#2f62cf" strokeWidth="1.5" />
        <path d="M8.5 9l-5 5" stroke="#2f62cf" strokeWidth="2.5" />
    </Icon>
);

const CursorIcon = () => (
    <Icon><path d="M6 2v12l3-3 2 5 2.500-1-2.200-4.500H15z" fill="#444" /></Icon>
);
const CrossIcon = () => (
    <Icon><path d="M9.5 2v5M9.5 12v5M2 9.5h5M12 9.5h5M9.5 9v1" stroke="#444" /></Icon>
);
const VLineIcon = () => <Icon><path d="M9.5 3v13" stroke="#444" /></Icon>;
const HLineIcon = () => <Icon><path d="M3 9.5h12" stroke="#444" /></Icon>;
const TrendIcon = () => <Icon><path d="M3 15L15 4" stroke="#555" /></Icon>;
const ChannelIcon = () => (
    <Icon>
        <path d="M1 12L13 2M3 15L15 5M5 6v9M8 4v9M11 2v9M1 9h8M6 6h9" stroke="#555" />
        <path d="M16 12.5h-3v5h3M13 15h2.500" stroke="#444" />
    </Icon>
);
const FiboIcon = () => (
    <Icon>
        <path d="M1 2.5h14M1 6.5h14M1 10.5h14M1 14.5h9" stroke="#555" strokeDasharray="1 1" />
        <path d="M12.5 18v-5.500H16M12.500 15H15" stroke="#444" />
    </Icon>
);
const TextFrameIcon = () => (
    <Icon>
        <rect x="3.5" y="3.5" width="12" height="12" stroke="#666" strokeDasharray="1 1" />
        <path d="M6 6.500h7v2M6 6v2.500M9.500 6v7M8 13h3" stroke="#555" strokeWidth="1.5" />
    </Icon>
);
const ArrowsIcon = () => (
    <Icon>
        <path d="M5 2l4 4-3 1.500L2 5.500zM9 12l4-2 4 4-4 3z" fill="#555" />
        <path d="M4 9l2 2 5-5" stroke="#555" strokeWidth="1.5" />
    </Icon>
);

const AppIcon = ({ dim }) => (
    <Icon size={16}>
        <rect x="1" y="-2" width="12" height="14" fill="#fff" stroke={dim ? "#86aee0" : "#4a7fd0"} />
        <rect x="3.5" y="5.5" width="13" height="10" fill="#fff" stroke={dim ? "#86aee0" : "#4a7fd0"} />
        <path d="M5 9l1.500 4 2-4 2 4 2-4 2 4" stroke="#3a70c8" />
    </Icon>
);

const OrderIcon = ({ kind }) => (
    <Icon size={16}>
        <path d="M1 1h10l3 3v12.500H1z" fill="#fff" stroke="#777" />
        <path d="M11 1v3h3" stroke="#777" />
        <circle cx="12" cy="13.5" r="4" fill={kind === "buy" ? "#2a9fe0" : "#e2501c"} />
        <circle cx="11" cy="12.5" r="1.3" fill="#fff" fillOpacity="0.6" />
    </Icon>
);

const TrafficIcon = () => (
    <svg width="24" height="14" viewBox="0 0 24 14" className="shrink-0" shapeRendering="crispEdges" aria-hidden="true">
        {range(0, 7, 1).map((i) => (
            <g key={i}>
                <rect x={i * 3} y="0" width="2" height={10 - i} fill="#6d7d12" />
                <rect x={i * 3} y={11 - i} width="2" height={3 + i} fill="#17405e" />
            </g>
        ))}
    </svg>
);

/* ---------- toolbar parts ---------- */

const Grip = () => (
    <span className="w-[3px] h-5 mx-px shrink-0 bg-[repeating-linear-gradient(to_bottom,#a5a5a5_0_1px,#f0f0f0_1px_2px)]" />
);
const Sep = () => <span className="w-px h-[22px] mx-0.5 shrink-0 bg-[#a5a5a5]" />;
const BarEnd = () => <span className="w-px self-stretch ml-1 mr-[3px] shrink-0 bg-[#a5a5a5]" />;
const Caret = () => <span className="w-0 h-0 shrink-0 border-x-[3px] border-x-transparent border-t-[3px] border-t-black" />;

const ToolButton = ({ label, pressed, wide, children }) => (
    <button
        type="button"
        aria-label={label}
        aria-pressed={pressed}
        className={clsx(
            "h-[23px] mx-px shrink-0 flex items-center justify-center gap-[3px] border whitespace-nowrap",
            wide ? "px-1" : "w-[26px]",
            pressed ? "bg-[#f8f8f8] border-t-[#a0a0a0] border-l-[#a0a0a0] border-r-white border-b-white" : "border-transparent"
        )}
    >
        {children}
    </button>
);

const DropButton = ({ label, children }) => (
    <button type="button" aria-label={label} className="w-[37px] h-6 shrink-0 flex items-center justify-center gap-1">
        {children}
        <Caret />
    </button>
);

const Periods = ({ active }) => (
    <div className="flex items-center font-['DejaVu_Sans_Condensed','DejaVu_Sans',sans-serif] text-[9px] text-[#444]">
        {["M1", "M5", "M15", "M30", "H1", "H4", "D1", "W1", "MN"].map((p) => (
            <ToolButton key={p} pressed={p === active}>{p}</ToolButton>
        ))}
    </div>
);

const StandardTools = ({ running }) => (
    <>
        <Grip />
        <DropButton label="Новый график"><NewChartIcon /></DropButton>
        <DropButton label="Профили"><ProfilesIcon /></DropButton>
        <Sep />
        <ToolButton label="Обзор рынка"><MarketIcon /></ToolButton>
        <ToolButton label="Окно данных"><TargetIcon /></ToolButton>
        <ToolButton label="Навигатор"><FavoritesIcon /></ToolButton>
        <ToolButton label="Терминал" pressed={!running}><NavigatorIcon /></ToolButton>
        <ToolButton label="Тестер стратегий"><TesterIcon /></ToolButton>
        <Sep />
        <ToolButton wide><NewOrderIcon />Новый ордер</ToolButton>
        <ToolButton label="MetaEditor"><BookIcon /></ToolButton>
        <ToolButton label="VPS"><VpsIcon /></ToolButton>
        <ToolButton label="Сигналы"><SignalIcon /></ToolButton>
        <ToolButton wide pressed={running}><AutoTradeIcon running={running} />Авто-торговля</ToolButton>
        <BarEnd />
    </>
);

const ChartTools = ({ zoomOutDisabled }) => (
    <>
        <Grip />
        <ToolButton label="Бары" pressed><BarChartIcon /></ToolButton>
        <ToolButton label="Свечи"><CandleIcon /></ToolButton>
        <ToolButton label="Линия"><LineChartIcon /></ToolButton>
        <Sep />
        <ToolButton label="Приблизить"><ZoomIcon /></ToolButton>
        <ToolButton label="Отдалить"><ZoomIcon out disabled={zoomOutDisabled} /></ToolButton>
        <ToolButton label="Расположить окна"><TileIcon /></ToolButton>
        <Sep />
        <ToolButton label="Автопрокрутка" pressed><AutoScrollIcon /></ToolButton>
        <ToolButton label="Сдвиг графика" pressed><ShiftIcon /></ToolButton>
        <Sep />
        <DropButton label="Индикаторы"><IndicatorsIcon /></DropButton>
        <DropButton label="Периоды"><ClockIcon /></DropButton>
        <DropButton label="Шаблоны"><TemplateIcon /></DropButton>
    </>
);

const Notifications = ({ count }) => (
    <div className="ml-auto flex items-center gap-2 pr-1.5">
        <button type="button" aria-label="Поиск"><SearchIcon /></button>
        <button type="button" aria-label="Сообщения" className="relative w-6 h-[22px]">
            <span className="absolute left-0 bottom-0.5 w-4 h-[11px] rounded-full bg-[#e2e2e2] border border-[#b5b5b5]" />
            <span className="absolute right-0 top-0 w-4 h-4 rounded-full bg-[#e0341c] text-white text-[11px] leading-4 text-center">{count}</span>
        </button>
    </div>
);

const MenuBar = ({ dim }) => (
    <nav className={clsx("h-[14px] shrink-0 overflow-hidden border-b border-[#a0a0a0] flex items-center pl-0.5", dim ? "text-[#a0a0a0]" : "text-black")}>
        <AppIcon dim={dim} />
        <div className="flex gap-[19px] pl-2 pb-[7px]">
            {["Файл", "Вид", "Вставка", "Графики", "Сервис", "Окно", "Справка"].map((m) => (
                <button key={m} type="button">{m}</button>
            ))}
        </div>
        <div className={clsx("ml-auto self-start flex gap-px text-[#6f7f92]", dim && "opacity-70")}>
            {["M4 7.5h7", "M5.5 3.5h5v4h-5zM8 3V.5h5V5h-2", "M5 0l6 7M11 0l-6 7"].map((d, i) => (
                <button key={d} type="button" aria-label={["Свернуть", "Восстановить", "Закрыть"][i]} className={dim ? "bg-[#dedede]" : "bg-white"}>
                    <svg width="18" height="11" viewBox="0 0 18 11" fill="none" stroke="currentColor" strokeWidth="1.5" aria-hidden="true"><path d={d} /></svg>
                </button>
            ))}
        </div>
    </nav>
);

const StatusBar = ({ traffic, cells }) => (
    <footer className="h-[22px] shrink-0 flex items-stretch border-t border-[#a0a0a0] bg-[#f0f0f0] pt-1">
        {cells.map(([text, width], i) => (
            <span key={i} className={clsx("shrink-0 whitespace-nowrap", i > 0 && "border-l border-[#a0a0a0] pl-1.5", width)}>{text}</span>
        ))}
        <span className="border-l border-[#a0a0a0] pl-1.5 flex items-start gap-1 whitespace-nowrap"><TrafficIcon />{traffic}</span>
        <svg width="12" height="12" viewBox="0 0 12 12" className="ml-auto" stroke="#999" aria-hidden="true"><path d="M1 12L12 1M5 12l7-7M9 12l3-3" /></svg>
    </footer>
);

const ChartTabs = ({ tabs, active, dim }) => (
    <div className="flex items-start h-[21px] shrink-0 border-t border-black text-[#777]">
        <div className="flex items-start min-w-0 overflow-hidden pl-0.5">
            {tabs.map((t, i) => (
                <button
                    key={i}
                    type="button"
                    className={clsx(
                        "shrink-0 px-3 whitespace-nowrap",
                        i === active
                            ? "bg-white text-black border border-t-0 border-black h-[19px]"
                            : "h-[18px] relative after:absolute after:right-0 after:top-[3px] after:h-3 after:w-px after:bg-[#777]",
                        (i === active - 1 || i === tabs.length - 1) && "after:hidden"
                    )}
                >
                    {t}
                </button>
            ))}
        </div>
        <div className={clsx("ml-auto shrink-0 flex gap-2.5 pl-1.5 pr-2 text-[8px] leading-[18px]", dim ? "text-[#888]" : "text-black")}>
            <button type="button" aria-label="Влево">◀</button>
            <button type="button" aria-label="Вправо">▶</button>
        </div>
    </div>
);

/* ---------- terminal ---------- */

const COLUMNS = [
    ["Ордер", "w-[92px]"], ["Время", "w-[128px]"], ["Тип", "w-16"], ["Объем", "w-[50px]"], ["Символ", "w-16"], ["Цена", "w-[71px]"],
    ["S / L", "w-[71px]"], ["T / P", "w-[71px]"], ["Цена", "w-[71px]"], ["Комиссия", "w-[71px]"], ["Своп", "w-[71px]"], ["Прибыль", ""],
];

const ORDERS = [
    ["701468967", "2025.02.19 20:30:08", "buy", "1.66", "eurgbp", "0.82855", "0.00000", "0.00000", "0.82834", "0.00", "0.00", "-43.81"],
    ["701468990", "2025.02.19 20:30:30", "sell", "2.00", "eurusd", "1.04117", "0.00000", "0.00000", "1.04138", "0.00", "0.00", "-42.00"],
    ["701469008", "2025.02.19 20:30:47", "sell", "0.11", "usdind", "107.315", "0.000", "0.000", "107.335", "0.00", "0.00", "-2.20"],
];

const SECTIONS = [
    ["Торговля"], ["Активы"], ["История Счета"], ["Новости", 99], ["Алерты"], ["Почта", 7], ["Маркет", 118],
    ["Статьи"], ["Библиотека"], ["Эксперты"], ["Журнал"],
];

const Terminal = () => (
    <section className="flex shrink-0 mt-[3px] pr-[3px]">
        <div className="w-3 shrink-0 flex flex-col">
            <button type="button" aria-label="Закрыть" className="h-[14px] text-[11px] leading-[12px] font-bold">×</button>
            <div className="flex-1 flex items-start justify-center bg-linear-to-b from-[#dbe7f3] to-[#b9c9dc]">
                <span className="self-end [writing-mode:vertical-rl] rotate-180 text-[11px] leading-3 pt-0.5">Терминал</span>
            </div>
        </div>
        <div className="flex-1 min-w-0 border-t border-l border-[#999]">
            <table className="w-full table-fixed border-collapse bg-white">
                <thead>
                    <tr className="h-6 border-b border-[#ccc]">
                        {COLUMNS.map(([name, width], i) => (
                            <th
                                key={i}
                                scope="col"
                                className={clsx("font-normal whitespace-nowrap border-r border-[#e2e2e2]", i === 0 ? "text-left pl-1.5" : "text-right pr-1.5", width)}
                            >
                                {name}
                                {i === 0 && <span className="pl-3 text-[9px] text-[#777]">/</span>}
                            </th>
                        ))}
                    </tr>
                </thead>
                <tbody>
                    {ORDERS.map((order, r) => (
                        <tr key={order[0]} className={clsx("h-5 border-b border-[#ccc]", r === 1 && "bg-[#ebebeb]")}>
                            {order.map((value, i) => (
                                <td key={i} className={clsx("whitespace-nowrap leading-[18px] border-r border-[#ccc]", i === 0 ? "pl-[3px]" : "text-right pr-0.5")}>
                                    {i === 0 && <span className="flex items-center gap-1"><OrderIcon kind={order[2]} />{value}</span>}
                                    {i > 0 && i < 11 && value}
                                    {i === 11 && (
                                        <span className="flex items-center justify-end gap-2.5 pr-1">
                                            {value}
                                            <button type="button" aria-label="Закрыть ордер">
                                                <svg width="8" height="8" viewBox="0 0 8 8" stroke="#9a9a9a" strokeWidth="2" aria-hidden="true"><path d="M1 1l6 6M7 1L1 7" /></svg>
                                            </button>
                                        </span>
                                    )}
                                </td>
                            ))}
                        </tr>
                    ))}
                    <tr className="h-5 bg-[#c6c6c6] font-bold">
                        <td colSpan={11} className="pl-[3px] leading-[18px] whitespace-nowrap">
                            <span className="flex items-center gap-1">
                                <Icon size={16}>
                                    <rect x="2" y="1" width="13" height="16" rx="1" fill="#f3f3f3" stroke="#777" />
                                    <path d="M8.5 14l-4-4.500h2.500V5h3v4.500h2.500z" fill="#e2501c" stroke="#8f2a08" strokeWidth="0.7" />
                                </Icon>
                                <span className="whitespace-pre">Баланс: 96 412.45 USD  Средства: 96 324.44  Маржа: 3 928.84  Свободная маржа: 92 395.60  Уровень: 2451.73%</span>
                            </span>
                        </td>
                        <td className="text-right pr-6">-88.01</td>
                    </tr>
                </tbody>
            </table>
            <div className="h-[9px] bg-white" />
            <div className="flex items-start gap-px h-6 border-t border-black text-[#777] pl-0.5 overflow-hidden">
                {SECTIONS.map(([name, count], i) => (
                    <button
                        key={name}
                        type="button"
                        className={clsx(
                            "shrink-0 px-2.5 whitespace-nowrap",
                            i === 0
                                ? "bg-white text-black border border-t-0 border-black h-5"
                                : "h-[18px] relative after:absolute after:right-0 after:top-[4px] after:h-3 after:w-px after:bg-[#777]"
                        )}
                    >
                        {name}
                        {count && <sub className="ml-0.5 text-[9px] leading-none font-bold text-[#ee2a2a]">{count}</sub>}
                    </button>
                ))}
            </div>
        </div>
    </section>
);

/* ---------- windows ---------- */

const LeftWindow = () => (
    <div className="w-1/2 shrink-0 flex flex-col border-r-[3px] border-[#4a4a4a] overflow-hidden bg-[#f0f0f0]">
        <MenuBar dim />
        <div className="flex items-center h-[27px] shrink-0 border-b border-[#b5b5b5] overflow-hidden">
            <StandardTools />
            <ChartTools />
            <Notifications count={1} />
        </div>
        <div className="flex items-center h-7 shrink-0 border-b border-[#777] overflow-hidden">
            <Grip />
            <Periods active="M30" />
            <span className="w-px self-stretch mx-px shrink-0 bg-[#a5a5a5]" />
            <Grip />
            <ToolButton label="Курсор" pressed><CursorIcon /></ToolButton>
            <ToolButton label="Перекрестие"><CrossIcon /></ToolButton>
            <Sep />
            <ToolButton label="Вертикальная линия"><VLineIcon /></ToolButton>
            <ToolButton label="Горизонтальная линия"><HLineIcon /></ToolButton>
            <ToolButton label="Трендовая линия"><TrendIcon /></ToolButton>
            <ToolButton label="Канал"><ChannelIcon /></ToolButton>
            <ToolButton label="Фибоначчи"><FiboIcon /></ToolButton>
            <ToolButton><span className="text-[13px] text-[#555]">A</span></ToolButton>
            <ToolButton label="Метка"><TextFrameIcon /></ToolButton>
            <DropButton label="Стрелки"><ArrowsIcon /></DropButton>
            <BarEnd />
        </div>
        <div className="shrink-0 pr-0.5 pb-0.5"><UsdIndChart /></div>
        <ChartTabs dim active={2} tabs={["EURGBP,M30", "EURUSD,M30", "USDInd,M30"]} />
        <Terminal />
        <StatusBar
            traffic="4241/25 kb"
            cells={[
                ["Для вызова справки нажмите F1", "w-[242px]"], ["Default", "w-[116px]"], ["", "w-[102px]"], ["", "w-[71px]"],
                ["", "w-[71px]"], ["", "w-[69px]"], ["", "w-[70px]"], ["", "w-[65px]"],
            ]}
        />
    </div>
);

const RightWindow = () => (
    <div className="flex-1 min-w-0 flex flex-col overflow-hidden bg-[#f0f0f0]">
        <MenuBar />
        <div className="flex items-center h-[27px] shrink-0 pl-0.5 border-b border-[#b5b5b5] overflow-hidden">
            <StandardTools running />
            <Grip />
            <Periods active="H1" />
            <span className="w-px self-stretch mx-px shrink-0 bg-[#a5a5a5]" />
            <Grip />
            <ToolButton label="Курсор" pressed><CursorIcon /></ToolButton>
            <ToolButton label="Перекрестие"><CrossIcon /></ToolButton>
            <Sep />
            <ToolButton label="Вертикальная линия"><VLineIcon /></ToolButton>
            <Notifications count={5} />
        </div>
        <div className="flex items-center h-7 shrink-0 pl-0.5 border-b border-[#777] overflow-hidden">
            <ChartTools zoomOutDisabled />
            <BarEnd />
        </div>
        <div className="shrink-0 pr-[3px] pb-0.5"><EurGbpChart /></div>
        <ChartTabs
            active={7}
            tabs={["US500,M30", "NAS100,M30", "NAS100H5,H1", "EURUSD,H1", "GBPNZD,M30", "CADCHF,M15", "EURUSD,H1", "EURGBP,H1", "GBPUSD,H1", "CHFJPY,M30", "BRN"]}
        />
        <StatusBar
            traffic="30797/42 kb"
            cells={[
                ["Для вызова справки нажмите F1", "w-[244px]"], ["Default", "w-[116px]"], ["", "w-[102px]"], ["", "w-[71px]"],
                ["", "w-[71px]"], ["", "w-[69px]"], ["", "w-[70px]"], ["", "w-[66px]"],
            ]}
        />
    </div>
);

const App = () => (
    <div className="h-screen flex overflow-hidden bg-[#f0f0f0] text-black font-['Open_Sans','Noto_Sans',sans-serif] text-[11px] leading-4">
        <LeftWindow />
        <RightWindow />
    </div>
);

export default App;
